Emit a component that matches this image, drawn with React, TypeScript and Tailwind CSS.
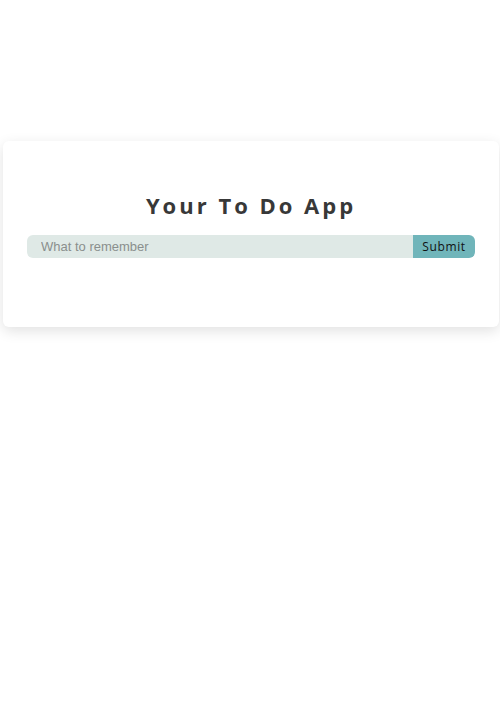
import React, { useState } from "react";

function App() {
  const [todo, setTodo] = useState("");

  return (
    <div className="min-h-[720px] w-[500px] bg-white pt-[141px]">
      <div className="ml-[3px] h-[186px] w-[496px] rounded-md bg-white shadow-[0_4px_14px_rgba(0,0,0,0.12)] pt-[49px]">
        <h1
          className="text-center text-[22px] font-bold leading-[30px] tracking-[3px] text-[#383838]"
          style={{ fontFamily: "'Open Sans', sans-serif" }}
        >
          Your To Do App
        </h1>
        <form
          className="mt-[15px] ml-[24px] flex h-[23px] w-[448px]"
          onSubmit={(e) => e.preventDefault()}
        >
          <input
            value={todo}
            onChange={(e) => setTodo(e.target.value)}
            placeholder="What to remember"
            className="h-full flex-1 rounded-l-md bg-[#dfe9e6] pl-[14px] text-[13px] text-[#555] placeholder:text-[#8a8f8d] outline-none"
            style={{ fontFamily: "'Liberation Sans', sans-serif" }}
          />
          <button
            type="submit"
            className="h-full w-[62px] rounded-r-md bg-[#70b5ba] text-[12px] font-medium tracking-[0.6px] text-[#111]"
            style={{ fontFamily: "'Open Sans', sans-serif" }}
          >
            Submit
          </button>
        </form>
      </div>
    </div>
  );
}

export default App;
